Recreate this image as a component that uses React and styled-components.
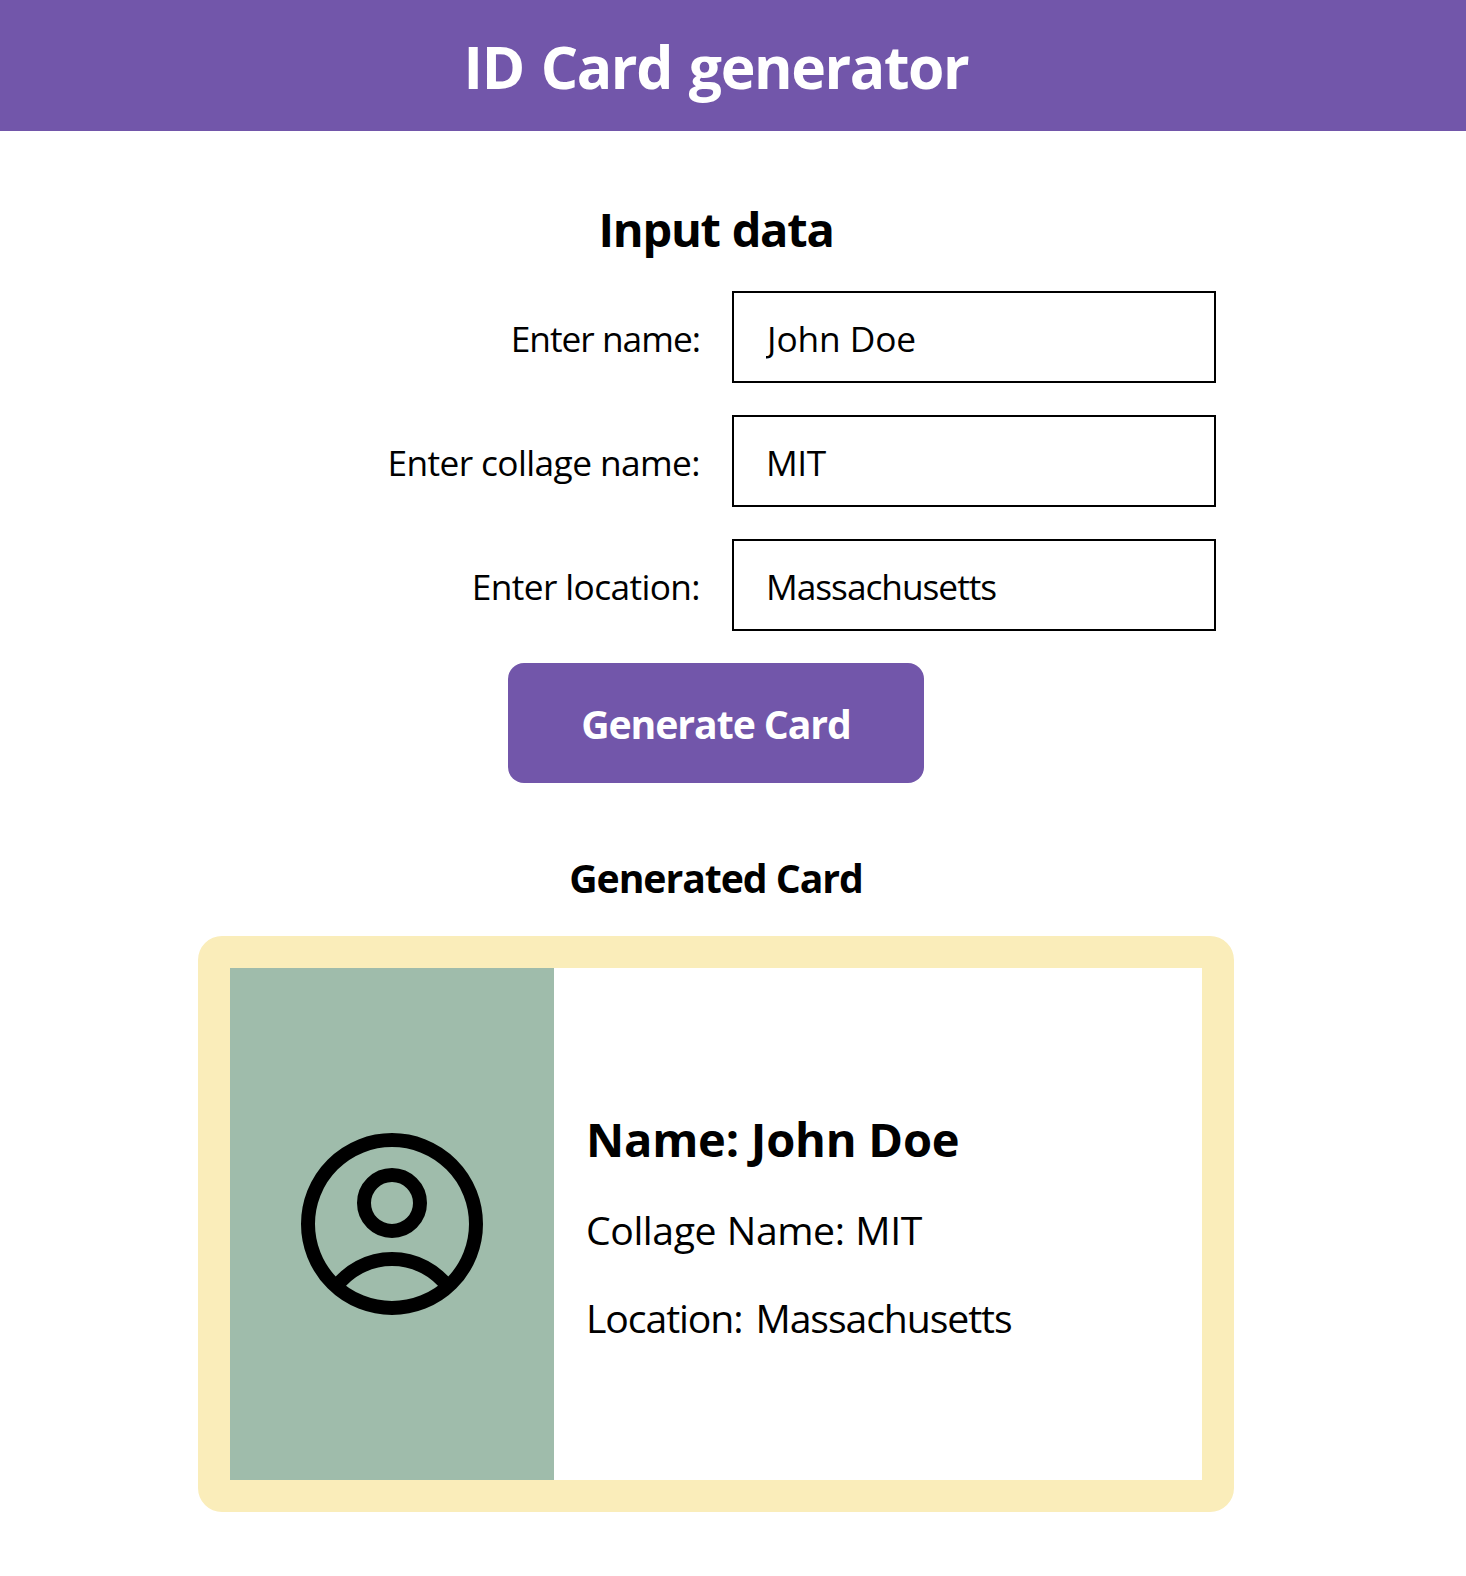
import React, { useState } from "react";
import styled, { createGlobalStyle } from "styled-components";

const GlobalStyle = createGlobalStyle`
  * {
    box-sizing: border-box;
  }
  body {
    margin: 0;
    background: #ffffff;
    color: #000000;
    font-family: "Segoe UI", "Open Sans", "Noto Sans", sans-serif;
    overflow: hidden;
  }
`;

const Page = styled.div`
  width: 1466px;
  min-height: 1576px;
  padding-right: 34px;
`;

const Banner = styled.header`
  display: flex;
  justify-content: center;
  align-items: center;
  height: 131px;
  margin-right: -34px;
  padding-right: 34px;
  background: #7256aa;
`;

const Title = styled.h1`
  margin: 0;
  font-size: 58.8px;
  font-weight: 700;
  letter-spacing: -1.4px;
  word-spacing: 3px;
  line-height: 80px;
  white-space: nowrap;
  color: #ffffff;
`;

const Form = styled.form`
  display: flex;
  flex-direction: column;
  align-items: center;
  padding-top: 66px;
`;

const FormTitle = styled.h2`
  margin: 0 0 30px;
  font-size: 47px;
  font-weight: 700;
  letter-spacing: -1.25px;
  word-spacing: 1px;
  line-height: 64px;
`;

const Field = styled.div`
  display: grid;
  grid-template-columns: 700px 484px;
  column-gap: 32px;
  align-self: stretch;
  height: 92px;
  margin-bottom: 32px;
`;

const Label = styled.label`
  padding-top: 1px;
  font-size: 35.3px;
  letter-spacing: ${(p) => p.$tracking}px;
  line-height: 92px;
  text-align: right;
  white-space: nowrap;
`;

const Input = styled.input`
  width: 484px;
  height: 92px;
  padding: 1px 32px 0;
  border: 2px solid #000000;
  border-radius: 0;
  outline: none;
  background: #ffffff;
  color: #000000;
  font-family: inherit;
  font-size: 35.3px;
  letter-spacing: ${(p) => p.$tracking}px;
  text-indent: ${(p) => p.$indent || 0}px;
`;

const Button = styled.button`
  width: 416px;
  height: 120px;
  padding: 0;
  border: 0;
  border-radius: 16px;
  background: #7256aa;
  color: #ffffff;
  font-family: inherit;
  font-size: 39.2px;
  font-weight: 700;
  letter-spacing: -1.07px;
`;

const Result = styled.section`
  display: flex;
  flex-direction: column;
  align-items: center;
  padding-top: 68px;
`;

const ResultTitle = styled.h3`
  margin: 0 0 31px;
  font-size: 39.2px;
  font-weight: 700;
  letter-spacing: -1.05px;
  line-height: 54px;
`;

const Card = styled.article`
  display: flex;
  width: 1036px;
  height: 576px;
  border: 32px solid #faedba;
  border-radius: 24px;
  background: #ffffff;
`;

const Portrait = styled.div`
  display: flex;
  flex: 0 0 324px;
  align-items: center;
  justify-content: center;
  background: #9fbcab;
`;

const Details = styled.div`
  display: flex;
  flex: 1;
  flex-direction: column;
  justify-content: center;
  padding: 3px 0 0 32px;
`;

const Name = styled.h2`
  margin: 0 0 32px;
  font-size: 47px;
  font-weight: 700;
  letter-spacing: -0.22px;
  line-height: 64px;
`;

const Line = styled.p`
  margin: 0 0 34px;
  font-size: 39.2px;
  letter-spacing: ${(p) => p.$tracking}px;
  word-spacing: ${(p) => p.$wordGap}px;
  line-height: 54px;

  &:last-child {
    margin-bottom: 0;
  }
`;

const UserIcon = () => (
  <svg width="182" height="182" viewBox="-13 -13 26 26" fill="none" stroke="#000" strokeWidth="2">
    <circle r="12" />
    <circle cy="-3" r="4" />
    <path d="M-7.97 8.967A10 10 0 0 1 7.97 8.967" />
  </svg>
);

const fields = [
  { key: "name", label: "Enter name:", labelTracking: -1, tracking: -0.1, indent: 1 },
  { key: "college", label: "Enter collage name:", labelTracking: -0.6, tracking: -0.4 },
  { key: "location", label: "Enter location:", labelTracking: -0.62, tracking: -1.03 },
];

export default function App() {
  const [data, setData] = useState({
    name: "John Doe",
    college: "MIT",
    location: "Massachusetts",
  });
  const [card, setCard] = useState(data);

  const submit = (e) => {
    e.preventDefault();
    setCard(data);
  };

  return (
    <>
      <GlobalStyle />
      <Page>
        <Banner>
          <Title>ID Card generator</Title>
        </Banner>
        <Form onSubmit={submit}>
          <FormTitle>Input data</FormTitle>
          {fields.map((f) => (
            <Field key={f.key}>
              <Label htmlFor={f.key} $tracking={f.labelTracking}>
                {f.label}
              </Label>
              <Input
                id={f.key}
                value={data[f.key]}
                spellCheck={false}
                onChange={(e) => setData({ ...data, [f.key]: e.target.value })}
                $tracking={f.tracking}
                $indent={f.indent}
              />
            </Field>
          ))}
          <Button type="submit">Generate Card</Button>
        </Form>
        <Result>
          <ResultTitle>Generated Card</ResultTitle>
          <Card>
            <Portrait>
              <UserIcon />
            </Portrait>
            <Details>
              <Name>Name: {card.name}</Name>
              <Line $tracking={-0.43} $wordGap={1}>
                Collage Name: {card.college}
              </Line>
              <Line $tracking={-1.1} $wordGap={4}>
                Location: {card.location}
              </Line>
            </Details>
          </Card>
        </Result>
      </Page>
    </>
  );
}
